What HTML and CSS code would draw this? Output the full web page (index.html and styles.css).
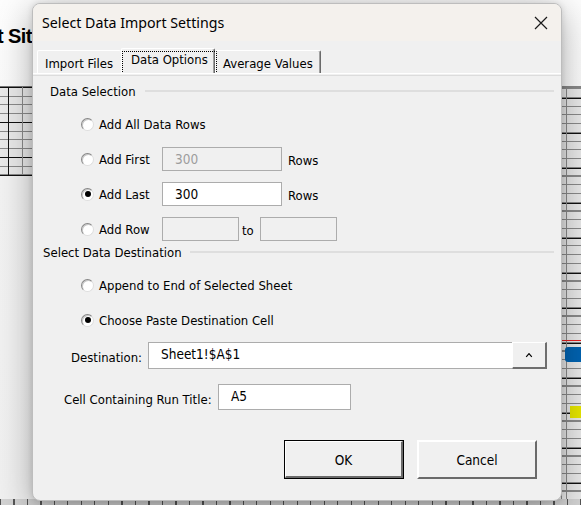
FILE: index.html
```html
<!DOCTYPE html>
<html>
<head>
<meta charset="utf-8">
<link rel="stylesheet" href="styles.css">
</head>
<body>
<div class="desktop">
  <div class="sheet-title">t Site Data</div>
  <div class="grid grid-left"></div>
  <div class="grid grid-right"></div>
  <div class="grid-bottom"></div>
  <div class="red-line"></div>
  <div class="blue-mark"></div>
  <div class="yellow-mark"></div>

  <div class="dialog">
    <div class="titlebar">
      <span class="title">Select Data Import Settings</span>
      <svg class="close" width="14" height="14" viewBox="0 0 14 14"><path d="M1 1L13 13M13 1L1 13" stroke="#1a1a1a" stroke-width="1.2" fill="none"/></svg>
    </div>
    <div class="tabs">
      <div class="tab tab-import">Import Files</div>
      <div class="tab tab-data active"><span class="focus">Data Options</span></div>
      <div class="tab tab-avg">Average Values</div>
    </div>
    <div class="panel">
      <div class="section-head head-1"><span>Data Selection</span><i class="rule"></i></div>
      <div class="opt-row first-row">
        <span class="radio"></span><span class="opt-label">Add All Data Rows</span>
      </div>
      <div class="opt-row">
        <span class="radio"></span><span class="opt-label fixed">Add First</span>
        <span class="field disabled w120">300</span><span class="unit">Rows</span>
      </div>
      <div class="opt-row">
        <span class="radio checked"></span><span class="opt-label fixed">Add Last</span>
        <span class="field w120">300</span><span class="unit">Rows</span>
      </div>
      <div class="opt-row">
        <span class="radio"></span><span class="opt-label fixed">Add Row</span>
        <span class="field disabled w77"></span><span class="to">to</span><span class="field disabled w77"></span>
      </div>
      <div class="section-head head-2"><span>Select Data Destination</span><i class="rule"></i></div>
      <div class="opt-row first-row">
        <span class="radio"></span><span class="opt-label">Append to End of Selected Sheet</span>
      </div>
      <div class="opt-row">
        <span class="radio checked"></span><span class="opt-label">Choose Paste Destination Cell</span>
      </div>
      <div class="dest-row">
        <span class="dest-label">Destination:</span>
        <span class="field dest-field">Sheet1!$A$1</span>
        <span class="ref-btn"><svg width="10" height="6" viewBox="0 0 10 6"><path d="M2.2 4.8L5 1.6L7.8 4.8" stroke="#000" stroke-width="1.2" fill="none"/></svg></span>
      </div>
      <div class="title-row">
        <span class="title-label">Cell Containing Run Title:</span>
        <span class="field title-field">A5</span>
      </div>
      <div class="btn-row">
        <span class="btn default"><span class="btn-in">OK</span></span>
        <span class="btn"><span class="btn-in">Cancel</span></span>
      </div>
    </div>
  </div>
</div>
</body>
</html>
```
FILE: styles.css
```css
* { box-sizing: border-box; }
html, body { margin: 0; padding: 0; }
body {
  width: 581px; height: 505px; overflow: hidden;
  font-family: "DejaVu Sans Condensed", "DejaVu Sans", sans-serif;
  font-size: 13px;
  color: #000;
}
.desktop {
  position: relative; width: 581px; height: 505px; overflow: hidden;
  background: linear-gradient(#fdfdfd 0, #fafafa 86px, #f2f2f2 180px, #f0f0f0 100%);
}
.sheet-title {
  position: absolute; left: -3px; top: 26px; z-index: 0;
  font-family: "Liberation Sans", Arial, sans-serif; font-weight: bold; font-size: 20px; line-height: 20px;
  letter-spacing: -0.6px;
  white-space: nowrap;
}
.grid {
  position: absolute; z-index: 0;
  background-color: #e9e9e9;
  background-image:
    repeating-linear-gradient(to bottom, #111 0, #111 1px, transparent 1px, transparent 35px),
    repeating-linear-gradient(to bottom, #8a8a8a 0, #8a8a8a 1px, transparent 1px, transparent 8.75px);
}
.grid-left {
  left: 0; top: 86px; width: 40px; height: 90px;
  border-top: 1px solid #777; border-bottom: 1px solid #111;
}
.grid-left::before, .grid-left::after { content: ""; position: absolute; top: 0; bottom: 0; width: 1px; }
.grid-left::before { left: 8px; background: #111; }
.grid-left::after { left: 22px; background: #8a8a8a; }
.grid-right {
  left: 561px; top: 86px; width: 20px; height: 419px;
  border-top: 2px solid #888;
  background-position: 0 10px, 0 0;
}
.grid-right::before, .grid-right::after { content: ""; position: absolute; top: 0; bottom: 0; width: 1px; background: #8a8a8a; }
.grid-right::before { left: 0; }
.grid-right::after { left: 5px; }
.grid-bottom {
  position: absolute; left: 0; top: 499px; width: 581px; height: 6px; z-index: 0;
  background-color: #d2d2d2;
  background-image: repeating-linear-gradient(to right, #555 0, #555 1px, transparent 1px, transparent 13.5px);
}
.red-line { position: absolute; z-index: 0; left: 561px; top: 340px; width: 20px; height: 1px; background: #e82020; }
.blue-mark { position: absolute; z-index: 0; left: 565px; top: 347px; width: 20px; height: 15px; background: #0063b1; border-radius: 3px; }
.yellow-mark { position: absolute; z-index: 0; left: 570px; top: 406px; width: 12px; height: 12px; background: #e6e600; }

.dialog {
  position: absolute; z-index: 5; left: 32px; top: 3px; width: 530px; height: 498px;
  border: 1px solid #bdbdbd; border-radius: 8px; overflow: hidden;
  background: #f0f0f0;
  box-shadow: 0 8px 34px rgba(0,0,0,0.32), 0 0 6px rgba(0,0,0,0.12);
  display: flex; flex-direction: column;
}
.titlebar {
  height: 37px; flex: none; background: #f4f1ed;
  display: flex; align-items: center; justify-content: space-between;
  padding: 0 13px 0 9px;
}
.title { font-family: "Noto Sans", "Open Sans", sans-serif; font-size: 14.2px; color: #000; }
.close { display: block; }
.tabs {
  height: 32px; flex: none; display: flex; align-items: flex-end; padding-left: 4px;
}
.tab {
  height: 23px; padding: 5px 0 0 7px; line-height: 16px; white-space: nowrap;
  border-top: 1px solid #fff; border-left: 1px solid #fff; border-right: 1px solid #6a6a6a;
  box-shadow: inset -1px 0 #a0a0a0;
  border-top-left-radius: 2px; border-top-right-radius: 2px;
}
.tab-import { width: 84px; border-right: none; box-shadow: none; }
.tab-data { width: 94px; height: 25px; padding: 3px 0 0 1px; }
.tab-avg { width: 106px; padding-left: 7px; }
.focus { display: inline-block; padding: 0 8px 5px 8px; margin-top: -1px; line-height: 16px; outline: 1px dotted #000; outline-offset: 0; }
.panel {
  flex: 1; border-top: 1px solid #fff;
  box-shadow: inset 0 1px #f0f0f0, inset 0 2px #dcdcdc;
}
.section-head { height: 16px; display: flex; align-items: center; line-height: 16px; padding-right: 7px; white-space: nowrap; }
.section-head span { padding-top: 2px; }
.head-1 { margin-top: 9px; padding-left: 17px; }
.head-1 .rule { margin-left: 9px; }
.head-2 { margin-top: 3px; padding-left: 10px; }
.head-2 .rule { margin-left: 8px; }
.rule { flex: 1; height: 2px; background: #dedede; display: block; }
.opt-row { height: 24px; display: flex; align-items: center; padding-left: 48px; margin-top: 11px; white-space: nowrap; }
.opt-row.first-row { margin-top: 13px; }
.radio {
  width: 13px; height: 13px; border-radius: 50%; flex: none; position: relative;
  background: #fff;
  border: 1px solid; border-color: #868686 #dedede #dedede #868686;
  box-shadow: inset 1px 1px 0 #c8c8c8;
  margin-right: 5px;
}
.radio.checked::after {
  content: ""; position: absolute; left: 2.5px; top: 2.5px; width: 6px; height: 6px; border-radius: 50%; background: #000;
}
.opt-label { line-height: 16px; padding-top: 2px; }
.opt-label.fixed { width: 63px; }
.unit, .to { padding-top: 2px; }
.field {
  height: 24px; border: 1px solid #acacac; background: #fff; display: flex; align-items: center;
  padding-left: 12px; font-size: 13.5px; flex: none;
}
.field.disabled { background: #f0f0f0; color: #9d9d9d; }
.w120 { width: 120px; }
.w77 { width: 77px; }
.unit { margin-left: 6px; }
.to { width: 21px; padding-left: 3px; }
.dest-row { height: 27px; display: flex; align-items: center; margin-top: 10px; padding-left: 38px; }
.dest-label { width: 77px; padding-top: 3px; }
.dest-field { width: 364px; height: 27px; border-right: none; padding-bottom: 3px; }
.ref-btn {
  width: 35px; height: 27px; display: flex; align-items: center; justify-content: center;
  border-top: 1px solid #fff; border-left: 1px solid #fff;
  border-right: 2px solid #6e6e6e; border-bottom: 2px solid #6e6e6e;
  background: #f0f0f0;
}
.title-row { height: 26px; display: flex; align-items: center; margin-top: 15px; padding-left: 31px; }
.title-label { width: 154px; padding-top: 4px; }
.title-field { width: 133px; height: 26px; padding-bottom: 2px; }
.btn-row { display: flex; gap: 13px; margin-top: 30px; padding-left: 251px; }
.btn {
  width: 120px; height: 39px; display: flex;
  border-top: 2px solid #fff; border-left: 2px solid #fff;
  border-right: 2px solid #6a6a6a; border-bottom: 2px solid #6a6a6a;
  background: #f0f0f0;
}
.btn.default { border: 1px solid #000; }
.btn-in { flex: 1; display: flex; align-items: center; justify-content: center; font-size: 13.5px; padding-top: 1px; }
.btn.default .btn-in {
  border-top: 1px solid #fff; border-left: 1px solid #fff;
  border-right: 2px solid #6a6a6a; border-bottom: 2px solid #6a6a6a;
}
```
